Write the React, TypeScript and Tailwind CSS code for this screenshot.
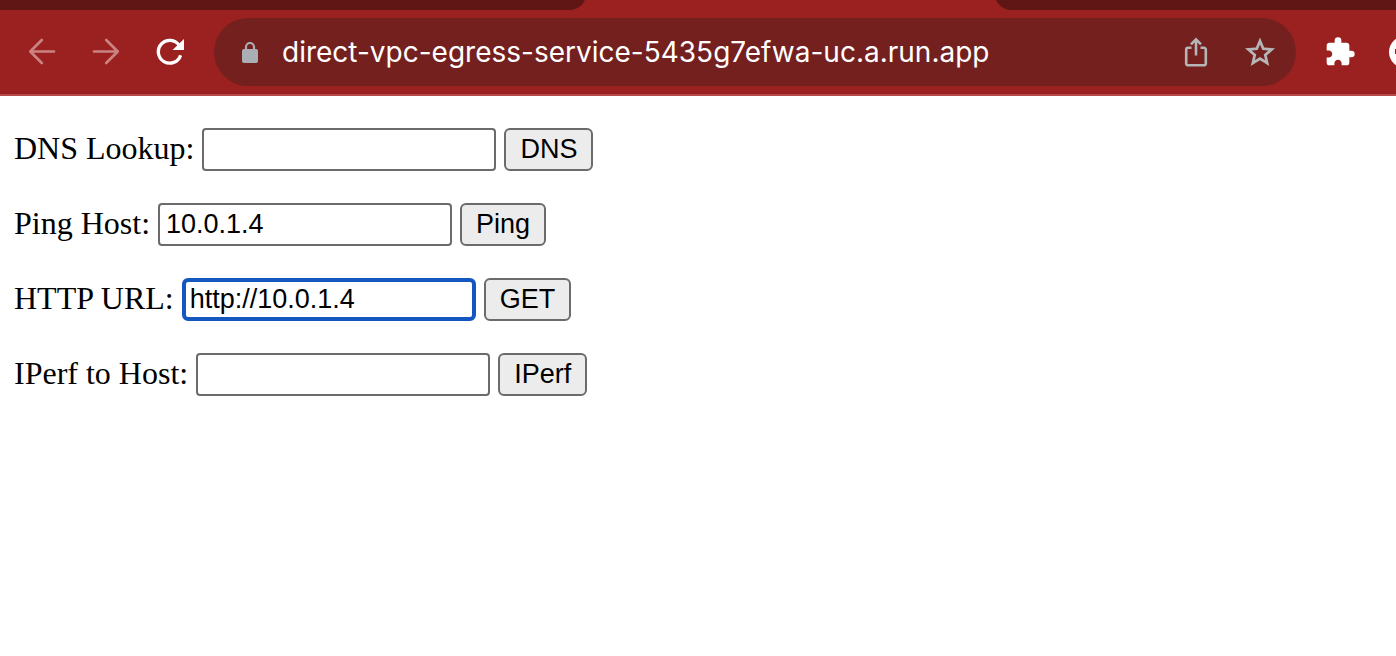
import React from "react";
import { MdExtension } from "react-icons/md";

type Tool = {
  id: string;
  label: string;
  value: string;
  action: string;
  active?: boolean;
};

const tools: Tool[] = [
  { id: "dns", label: "DNS Lookup:", value: "", action: "DNS" },
  { id: "ping", label: "Ping Host:", value: "10.0.1.4", action: "Ping" },
  { id: "http", label: "HTTP URL:", value: "http://10.0.1.4", action: "GET", active: true },
  { id: "iperf", label: "IPerf to Host:", value: "", action: "IPerf" },
];

function BackIcon() {
  return (
    <svg width="28" height="28" viewBox="0 0 28 28" fill="none" stroke="currentColor" strokeWidth="2.7" strokeLinecap="round" strokeLinejoin="round">
      <path d="M26 13.5H2.4M13.8 2L2.3 13.5L13.8 25" />
    </svg>
  );
}

function ForwardIcon() {
  return (
    <svg width="28" height="28" viewBox="0 0 28 28" fill="none" stroke="currentColor" strokeWidth="2.7" strokeLinecap="round" strokeLinejoin="round">
      <path d="M2 13.5H25.6M14.2 2L25.7 13.5L14.2 25" />
    </svg>
  );
}

function ReloadIcon() {
  return (
    <svg width="28" height="28" viewBox="0 0 28 28" fill="none">
      <path d="M23.2 7.4A11.4 11.4 0 1 0 24.6 17.2" stroke="currentColor" strokeWidth="3.3" />
      <path d="M28 1V12H16.5Z" fill="currentColor" />
    </svg>
  );
}

function LockIcon() {
  return (
    <svg width="16" height="22" viewBox="0 0 16 22" fill="none">
      <path d="M4 10V6a4 4 0 0 1 8 0V10" stroke="currentColor" strokeWidth="2.2" />
      <rect y="8" width="16" height="14" rx="2" fill="currentColor" />
    </svg>
  );
}

function ShareIcon() {
  return (
    <svg width="24" height="30" viewBox="0 0 24 30" fill="none" stroke="currentColor" strokeWidth="2.6">
      <path d="M7.5 10.8H4a1.8 1.8 0 0 0-1.8 1.8v13.9a1.8 1.8 0 0 0 1.8 1.8h16a1.8 1.8 0 0 0 1.8-1.8V12.6a1.8 1.8 0 0 0-1.8-1.8h-3.5" />
      <path d="M12 18.5V2.8M7 7.4L12 2.4l5 5" />
    </svg>
  );
}

const starOutline =
  "M12 2L14.81 8.62L22 9.24L16.55 13.97L18.18 21L12 17.27L5.82 21L7.46 13.97L2 9.24L9.19 8.63Z";

function StarIcon() {
  return (
    <svg width="36" height="36" viewBox="0 -0.3 24 24" fill="none">
      <clipPath id="star-shape">
        <path d={starOutline} />
      </clipPath>
      <path d={starOutline} clipPath="url(#star-shape)" stroke="currentColor" strokeWidth="3.7" />
    </svg>
  );
}

function ProfileIcon() {
  return (
    <svg width="32" height="32" viewBox="0 0 32 32">
      <circle cx="16" cy="16" r="16" fill="#ffffff" />
      <path d="M7 13V18" stroke="#9a2120" strokeWidth="2" />
    </svg>
  );
}

function BrowserBar() {
  return (
    <header className="overflow-hidden border-b-2 border-[#b54849] bg-[#9a2120]">
      <div className="flex h-[10px] items-end justify-between">
        <div className="h-6 w-[42%] rounded-br-2xl bg-[#611616]" />
        <div className="h-6 w-[401px] rounded-bl-2xl bg-[#611616]" />
      </div>
      <div className="flex h-[84px] items-center pl-7">
        <nav className="flex gap-9 pr-[30px] text-white">
          <button aria-label="Back" className="text-[#cb8382]"><BackIcon /></button>
          <button aria-label="Forward" className="text-[#cb8382]"><ForwardIcon /></button>
          <button aria-label="Reload"><ReloadIcon /></button>
        </nav>
        <div className="flex h-[68px] flex-1 items-center rounded-full bg-[#74201f] pl-7 pr-[18px] text-[#b5b5b5]">
          <span className="text-[#a9afb4]"><LockIcon /></span>
          <input
            type="text"
            aria-label="Address"
            defaultValue="direct-vpc-egress-service-5435g7efwa-uc.a.run.app"
            className="ml-6 min-w-0 flex-1 bg-transparent font-['Inter',sans-serif] text-[28px] text-white outline-none"
          />
          <button aria-label="Share" className="mr-[34px]"><ShareIcon /></button>
          <button aria-label="Bookmark"><StarIcon /></button>
        </div>
        <div className="flex w-[100px] items-center pl-7 text-white">
          <button aria-label="Extensions" className="shrink-0"><MdExtension size={32} /></button>
          <button aria-label="Profile" className="ml-[33px] shrink-0"><ProfileIcon /></button>
        </div>
      </div>
    </header>
  );
}

function ToolRow({ tool }: { tool: Tool }) {
  return (
    <form className="flex items-start gap-2" onSubmit={(e) => e.preventDefault()}>
      <label htmlFor={tool.id} className="font-['Liberation_Serif',serif] text-[32px] leading-10">
        {tool.label}
      </label>
      <input
        id={tool.id}
        type="text"
        defaultValue={tool.value}
        className={
          "h-[43px] w-[294px] font-['Liberation_Sans',sans-serif] text-[27px] outline-none " +
          (tool.active ? "rounded-md border-4 border-[#1557c0] px-1" : "rounded border-2 border-[#6b6b6b] px-1.5")
        }
      />
      <button
        type="submit"
        className="h-[43px] rounded-md border-2 border-[#6b6b6b] bg-[#ececec] px-3.5 pb-0.5 font-['Liberation_Sans',sans-serif] text-[27px] leading-8"
      >
        {tool.action}
      </button>
    </form>
  );
}

export default function App() {
  return (
    <div className="min-h-screen bg-white text-black">
      <BrowserBar />
      <main className="flex flex-col gap-8 px-3.5 py-8">
        {tools.map((tool) => (
          <ToolRow key={tool.id} tool={tool} />
        ))}
      </main>
    </div>
  );
}
